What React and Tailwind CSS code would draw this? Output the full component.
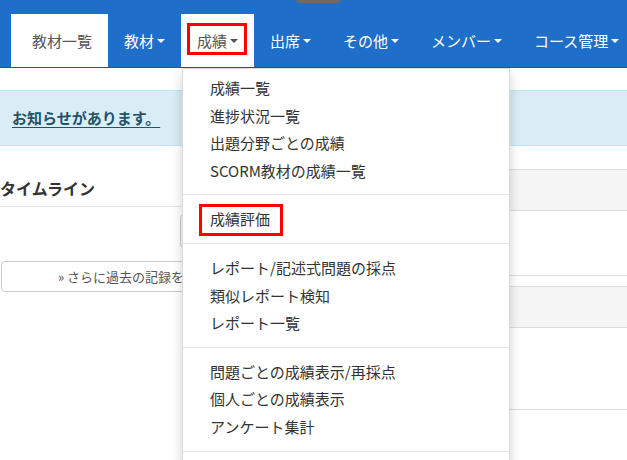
import React from 'react';

// ── Nav data ─────────────────────────────────────────────────────────
const navItems = [
  { label: '教材一覧', active: true, caret: false },
  { label: '教材', caret: true },
  { label: '成績', active: true, caret: true, marked: true },
  { label: '出席', caret: true },
  { label: 'その他', caret: true },
  { label: 'メンバー', caret: true },
  { label: 'コース管理', caret: true },
];

const menuGroups = [
  ['成績一覧', '進捗状況一覧', '出題分野ごとの成績', 'SCORM教材の成績一覧'],
  ['成績評価'],
  ['レポート/記述式問題の採点', '類似レポート検知', 'レポート一覧'],
  ['問題ごとの成績表示/再採点', '個人ごとの成績表示', 'アンケート集計'],
];

const Caret = ({ color }) => (
  <span
    className={`ml-[3px] inline-block h-0 w-0 border-x-[4px] border-t-[4px] border-x-transparent ${color}`}
  />
);

const NavItem = ({ item }) => {
  if (item.label === '教材一覧') {
    return (
      <div className="flex h-[53px] items-center bg-white pl-[21px] pr-[16px] text-[#555]">
        {item.label}
      </div>
    );
  }
  return (
    <div
      className={`relative flex h-[53px] items-center px-[16px] ${
        item.active ? 'bg-white text-[#555]' : 'text-white'
      }`}
    >
      {item.label}
      <Caret color={item.active ? 'border-t-[#555]' : 'border-t-white'} />
      {/* red annotation box */}
      {item.marked && (
        <span className="absolute left-[6px] top-[9px] h-[32px] w-[60px] border-[3px] border-[#ff0000]" />
      )}
    </div>
  );
};

// ─────────────────────────────────────────────────────────────────────
export default function App() {
  return (
    <div
      className="relative h-[460px] w-[627px] overflow-hidden bg-white text-[15px] text-[#333]"
      style={{ fontFamily: '"Noto Sans CJK JP", "Liberation Sans", sans-serif' }}
    >
      {/* Navbar */}
      <nav className="flex h-[68px] items-end border-b border-[#1a58a3] bg-[#1f6ec9] pl-[11px] leading-[21px] whitespace-nowrap">
        {navItems.map((item) => (
          <NavItem key={item.label} item={item} />
        ))}
      </nav>
      <span className="absolute left-[296px] top-0 h-[3px] w-[45px] rounded-b-[3px] bg-[#6b6b6b]" />

      {/* Notice */}
      <div className="mt-[22px] flex h-[56px] items-center border-y border-[#bce8f1] bg-[#d9edf7] px-[12px]">
        <a className="font-bold leading-[20px] text-[#245269] underline underline-offset-[3px]">
          お知らせがあります。
        </a>
      </div>

      {/* Body columns */}
      <div className="mt-[23px] grid grid-cols-[310px_1fr] gap-[15px]">
        <div>
          <h3 className="flex h-[38px] items-center border-b border-[#e5e5e5] text-[16px] font-bold leading-[20px] text-[#333]">
            タイムライン
          </h3>
          <div className="ml-[180px] mt-[7px] h-[34px] w-[120px] rounded-[4px] border border-[#ccc]" />
          <button className="mt-[13px] ml-[1px] flex h-[31px] w-[292px] items-center justify-center rounded-[4px] border border-[#ccc] bg-white text-[13px] leading-[18px] whitespace-nowrap text-[#555]">
            » さらに過去の記録を表示する
          </button>
        </div>

        <div className="flex flex-col gap-[10px]">
          <div className="border-y border-[#ddd]">
            <div className="h-[41px] border-b border-[#ddd] bg-[#f5f5f5]" />
            <div className="h-[64px]" />
          </div>
          <div className="border-t border-[#ddd]">
            <div className="h-[41px] border-b border-[#ddd] bg-[#f5f5f5]" />
            <div className="h-[82px] border-b border-[#ddd]" />
            <div className="h-[60px]" />
          </div>
        </div>
      </div>

      {/* Dropdown menu */}
      <div className="absolute left-[182px] top-[68px] w-[328px] rounded-b-[4px] border border-black/15 bg-white py-[5px] shadow-[0_6px_12px_rgba(0,0,0,0.175)]">
        {menuGroups.map((group, gi) => (
          <div key={gi}>
            {gi > 0 && <div className="my-[10px] h-px bg-[#e5e5e5]" />}
            {group.map((label) => (
              <div
                key={label}
                className="relative py-[3px] pl-[27px] text-[15px] leading-[21.6px] whitespace-nowrap text-[#333]"
              >
                {label}
                {label === '成績評価' && (
                  <span className="absolute left-[16px] top-[-1px] h-[32px] w-[84px] border-[3px] border-[#ff0000]" />
                )}
              </div>
            ))}
          </div>
        ))}
        {/* menu continues below the fold */}
        <div className="my-[10px] h-px bg-[#e5e5e5]" />
        <div className="h-[30px]" />
      </div>
    </div>
  );
}
